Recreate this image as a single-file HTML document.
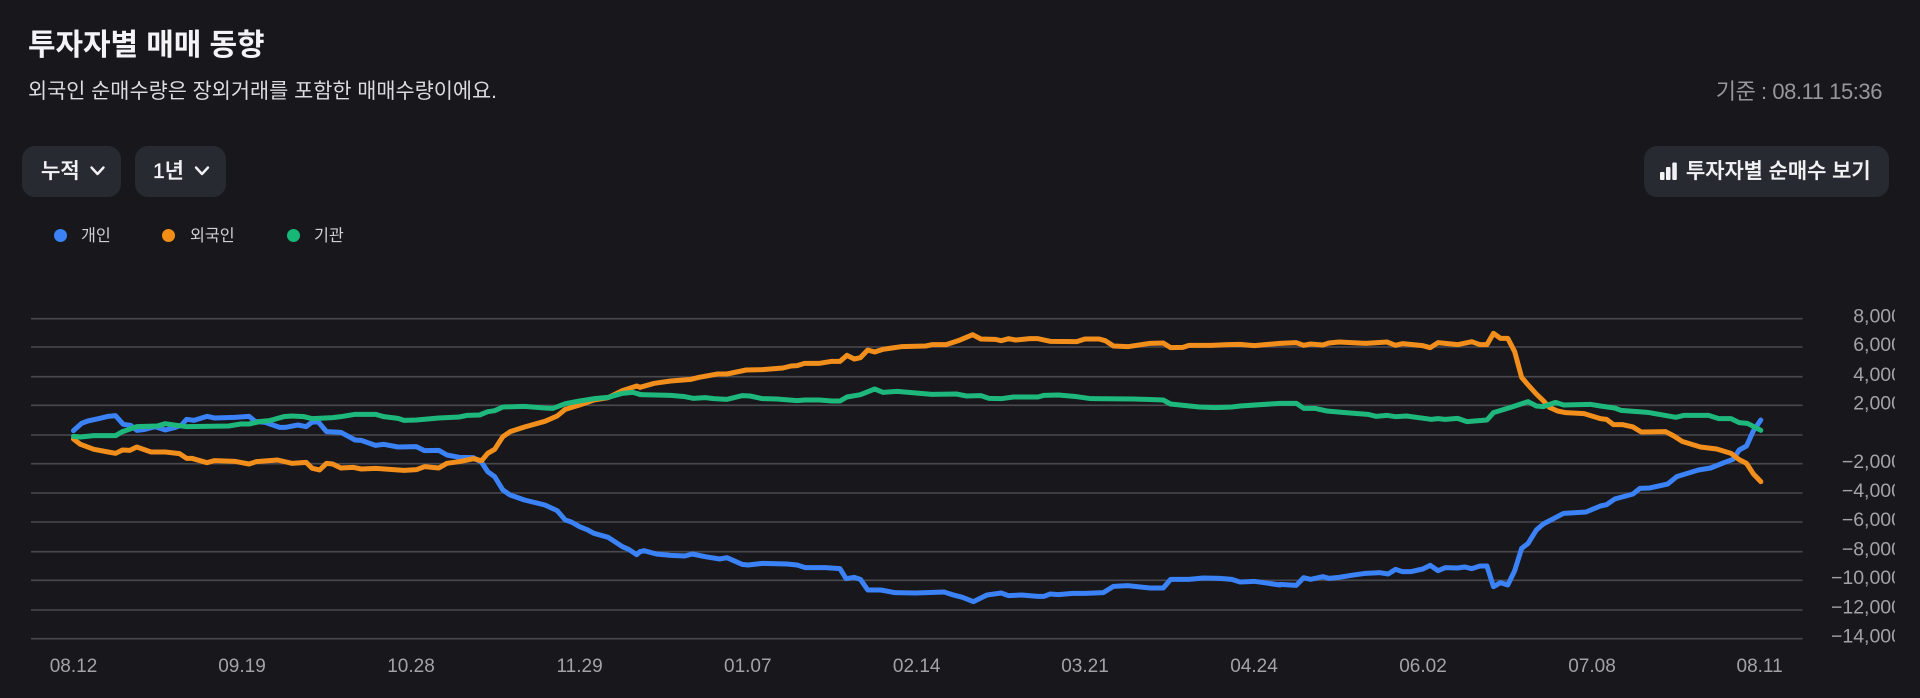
<!DOCTYPE html>
<html lang="ko">
<head>
<meta charset="utf-8">
<title>투자자별 매매 동향</title>
<style>
html,body{margin:0;padding:0;background:#17171c;}
body{width:1920px;height:698px;position:relative;overflow:hidden;font-family:"Liberation Sans","Noto Sans CJK KR",sans-serif;}
.t{position:absolute;white-space:nowrap;font-family:"Liberation Sans","Noto Sans CJK KR",sans-serif;}
.btn{position:absolute;background:#282a31;border-radius:13px;top:146px;height:51px;}
.dot{position:absolute;width:13px;height:13px;border-radius:50%;top:229px;}
.b{-webkit-text-stroke:.35px #f2f2f4;}
svg{position:absolute;left:0;top:0;}
</style>
</head>
<body>
<div class="t" style="left:28px;top:25px;font-size:30px;line-height:42px;font-weight:700;color:#f4f4f6;letter-spacing:-.1px">투자자별 매매 동향</div>
<div class="t" style="left:28px;top:77px;font-size:20.8px;line-height:30px;color:#dcdce0;">외국인 순매수량은 장외거래를 포함한 매매수량이에요.</div>
<div class="t" style="right:38px;top:77px;font-size:22px;line-height:30px;color:#96969c;letter-spacing:-.45px">기준 : 08.11 15:36</div>

<div class="btn" style="left:22px;width:99px;"></div>
<div class="btn" style="left:135px;width:91px;"></div>
<div class="btn" style="left:1644px;width:245px;"></div>
<div class="t b" style="left:41px;top:157px;font-size:21px;line-height:30px;color:#f2f2f4;font-weight:500">누적</div>
<div class="t b" style="left:153px;top:157px;font-size:21px;line-height:30px;color:#f2f2f4;font-weight:500">1년</div>
<div class="t b" style="left:1686px;top:157px;font-size:20.9px;line-height:30px;color:#f2f2f4;font-weight:500">투자자별 순매수 보기</div>

<div class="dot" style="left:54px;background:#3b82f6"></div>
<div class="dot" style="left:162px;background:#f28e16"></div>
<div class="dot" style="left:287px;background:#16b777"></div>
<div class="t" style="left:81px;top:225px;font-size:16.2px;line-height:23px;color:#d0d0d4">개인</div>
<div class="t" style="left:190px;top:225px;font-size:16.2px;line-height:23px;color:#d0d0d4">외국인</div>
<div class="t" style="left:314px;top:225px;font-size:16.2px;line-height:23px;color:#d0d0d4">기관</div>

<svg width="1920" height="698" viewBox="0 0 1920 698" xmlns="http://www.w3.org/2000/svg">
  <g stroke="#f2f2f4" stroke-width="2.4" fill="none" stroke-linecap="round" stroke-linejoin="round">
    <path d="M91.5 167.5 L97.5 174 L103.5 167.5"/>
    <path d="M196 167.5 L202 174 L208 167.5"/>
  </g>
  <g fill="#f2f2f4">
    <rect x="1660" y="172" width="4.5" height="8" rx="1"/>
    <rect x="1666" y="167" width="4.5" height="13" rx="1"/>
    <rect x="1672.3" y="162.5" width="4.5" height="17.5" rx="1"/>
  </g>
  <g stroke="#48484e" stroke-width="1.6">
    <path d="M31 318.7H1802.5M31 347H1802.5M31 376.7H1802.5M31 405.3H1802.5M31 435H1802.5M31 463.7H1802.5M31 493H1802.5M31 522H1802.5M31 551.7H1802.5M31 580.3H1802.5M31 610H1802.5M31 638.7H1802.5"/>
  </g>
  <g fill="none" stroke-width="5" stroke-linejoin="round" stroke-linecap="round">
    <g stroke="#3b82f6">
      <polyline vector-effect="non-scaling-stroke" transform="translate(0,300) scale(.40816,.33333)" points="180,392 200,370 215,363 245,355 265,349 283,347 302,373 320,376 335,391 355,388 380,380 405,390 430,382 445,375 457,358 475,361 507,349 525,354 575,352 610,349 625,364 650,367 685,382 700,382 730,375 750,380 765,366 780,366 800,395 835,397 870,420 885,421 920,436 940,433 975,441 1020,440 1040,452 1075,451 1095,465 1125,472 1160,473 1180,487 1195,515 1212,530 1232,570 1250,585 1285,600 1335,615 1365,632 1385,660 1400,666 1420,680 1440,690 1455,700 1490,712 1525,740 1540,748 1560,764 1568,755"/>
      <polyline vector-effect="non-scaling-stroke" transform="translate(640,300) scale(.40816,.33333)" points="0,755 10,752 40,762 75,766 110,768 128,762 160,770 195,777 213,773 250,793 265,795 300,790 360,792 385,795 405,803 455,803 490,806 505,836 525,832 540,838 558,870 590,870 625,878 675,879 745,876 765,884 790,892 817,905 850,885 885,879 903,887 935,885 975,889 990,889 1005,882 1025,884 1060,880 1090,880 1135,878 1160,859 1195,857 1250,864 1282,864 1300,838 1345,838 1380,834 1420,835 1450,838 1470,846 1505,844 1540,850 1568,855"/>
      <polyline vector-effect="non-scaling-stroke" transform="translate(1280,300) scale(.40816,.33333)" points="0,853 40,856 58,833 75,838 105,830 120,835 145,832 175,826 210,820 245,818 265,822 283,808 300,815 320,815 350,807 368,796 387,812 405,803 435,804 452,801 470,806 490,798 507,798 523,860 540,848 558,855 575,812 592,745 608,730 628,690 645,672 695,640 750,636 785,618 800,614 820,597 865,582 882,565 905,564 950,552 972,530 1025,510 1055,504 1090,487 1110,478 1125,450 1143,438 1160,392 1178,360"/>
    </g>
    <g stroke="#f28e1c">
      <polyline vector-effect="non-scaling-stroke" transform="translate(0,300) scale(.40816,.33333)" points="180,417 197,433 230,448 265,456 283,460 300,450 318,451 335,441 370,456 405,456 440,461 457,475 470,475 507,488 525,482 575,484 610,492 628,485 680,480 715,490 750,487 765,505 783,510 800,490 815,492 835,504 865,502 885,507 920,505 990,511 1020,509 1040,500 1075,504 1095,490 1125,485 1160,476 1180,482 1195,460 1212,448 1232,410 1250,395 1285,381 1335,364 1365,348 1385,328 1420,315 1455,300 1490,293 1525,272 1560,258 1568,262"/>
      <polyline vector-effect="non-scaling-stroke" transform="translate(640,300) scale(.40816,.33333)" points="0,262 35,250 75,243 125,238 145,232 190,222 213,222 260,210 300,209 350,204 370,198 385,197 403,190 440,190 470,184 490,184 507,166 525,177 540,173 558,150 575,156 595,148 640,140 700,138 715,134 750,134 780,122 815,104 835,117 870,118 885,122 903,116 920,120 955,116 975,116 1005,124 1070,125 1090,117 1125,117 1140,122 1160,138 1195,140 1250,130 1282,129 1300,143 1330,142 1345,136 1400,136 1440,134 1470,133 1505,137 1568,130"/>
      <polyline vector-effect="non-scaling-stroke" transform="translate(1280,300) scale(.40816,.33333)" points="0,130 40,128 58,136 75,132 105,135 120,129 145,126 210,130 262,126 283,136 300,131 350,137 368,143 387,128 435,134 470,125 490,134 507,134 523,100 540,115 558,115 575,155 592,232 608,255 628,282 645,302 660,322 680,333 700,338 745,341 785,356 800,358 817,374 840,374 865,381 885,396 945,395 965,408 985,424 1030,441 1070,447 1105,460 1125,479 1143,490 1160,522 1178,545"/>
    </g>
    <g stroke="#1fb87c">
      <polyline vector-effect="non-scaling-stroke" transform="translate(0,300) scale(.40816,.33333)" points="180,409 197,411 230,407 283,407 300,395 335,380 385,378 405,371 457,380 560,378 590,372 610,372 640,364 660,362 695,350 715,348 745,350 765,356 815,353 835,350 870,343 920,343 940,350 975,355 990,361 1020,360 1075,354 1125,351 1145,346 1175,345 1195,335 1212,332 1232,321 1285,319 1335,324 1355,325 1385,311 1420,303 1455,296 1490,292 1525,280 1550,277 1568,283"/>
      <polyline vector-effect="non-scaling-stroke" transform="translate(640,300) scale(.40816,.33333)" points="0,284 75,286 110,290 130,295 160,293 180,296 213,298 250,287 270,288 300,296 335,297 385,302 403,300 440,300 470,303 490,303 507,291 540,284 575,267 595,277 630,274 715,283 775,282 800,288 835,287 855,295 885,296 915,291 975,291 990,286 1025,285 1070,290 1105,296 1210,297 1282,300 1300,312 1370,321 1410,323 1450,321 1470,318 1568,310"/>
      <polyline vector-effect="non-scaling-stroke" transform="translate(1280,300) scale(.40816,.33333)" points="0,310 40,310 58,325 85,325 115,333 160,338 215,343 235,349 262,346 283,350 310,348 370,358 387,356 405,358 435,355 458,365 507,360 523,338 565,322 608,305 628,318 645,320 675,307 695,315 760,313 785,318 820,324 835,331 900,337 970,352 990,346 1050,346 1075,356 1105,356 1125,368 1145,370 1178,391"/>
    </g>
  </g>
  <g font-family="'Liberation Sans',sans-serif" font-size="19" fill="#a2a2a7" text-anchor="middle">
    <text x="73.5" y="672">08.12</text>
    <text x="242" y="672">09.19</text>
    <text x="411" y="672">10.28</text>
    <text x="579.6" y="672">11.29</text>
    <text x="747.8" y="672">01.07</text>
    <text x="916.7" y="672">02.14</text>
    <text x="1085" y="672">03.21</text>
    <text x="1254" y="672">04.24</text>
    <text x="1423" y="672">06.02</text>
    <text x="1592" y="672">07.08</text>
    <text x="1759.6" y="672">08.11</text>
  </g>
  <clipPath id="c"><rect x="1810" y="300" width="84.8" height="360"/></clipPath>
  <g clip-path="url(#c)" font-family="'Liberation Sans',sans-serif" font-size="19.5" fill="#a2a2a7" text-anchor="end">
    <text x="1902" y="322.5">8,000</text>
    <text x="1902" y="351">6,000</text>
    <text x="1902" y="381">4,000</text>
    <text x="1902" y="409.5">2,000</text>
    <text x="1902" y="468">−2,000</text>
    <text x="1902" y="497">−4,000</text>
    <text x="1902" y="526">−6,000</text>
    <text x="1902" y="555.5">−8,000</text>
    <text x="1902" y="584">−10,000</text>
    <text x="1902" y="613.5">−12,000</text>
    <text x="1902" y="642.5">−14,000</text>
  </g>
</svg>
</body>
</html>
